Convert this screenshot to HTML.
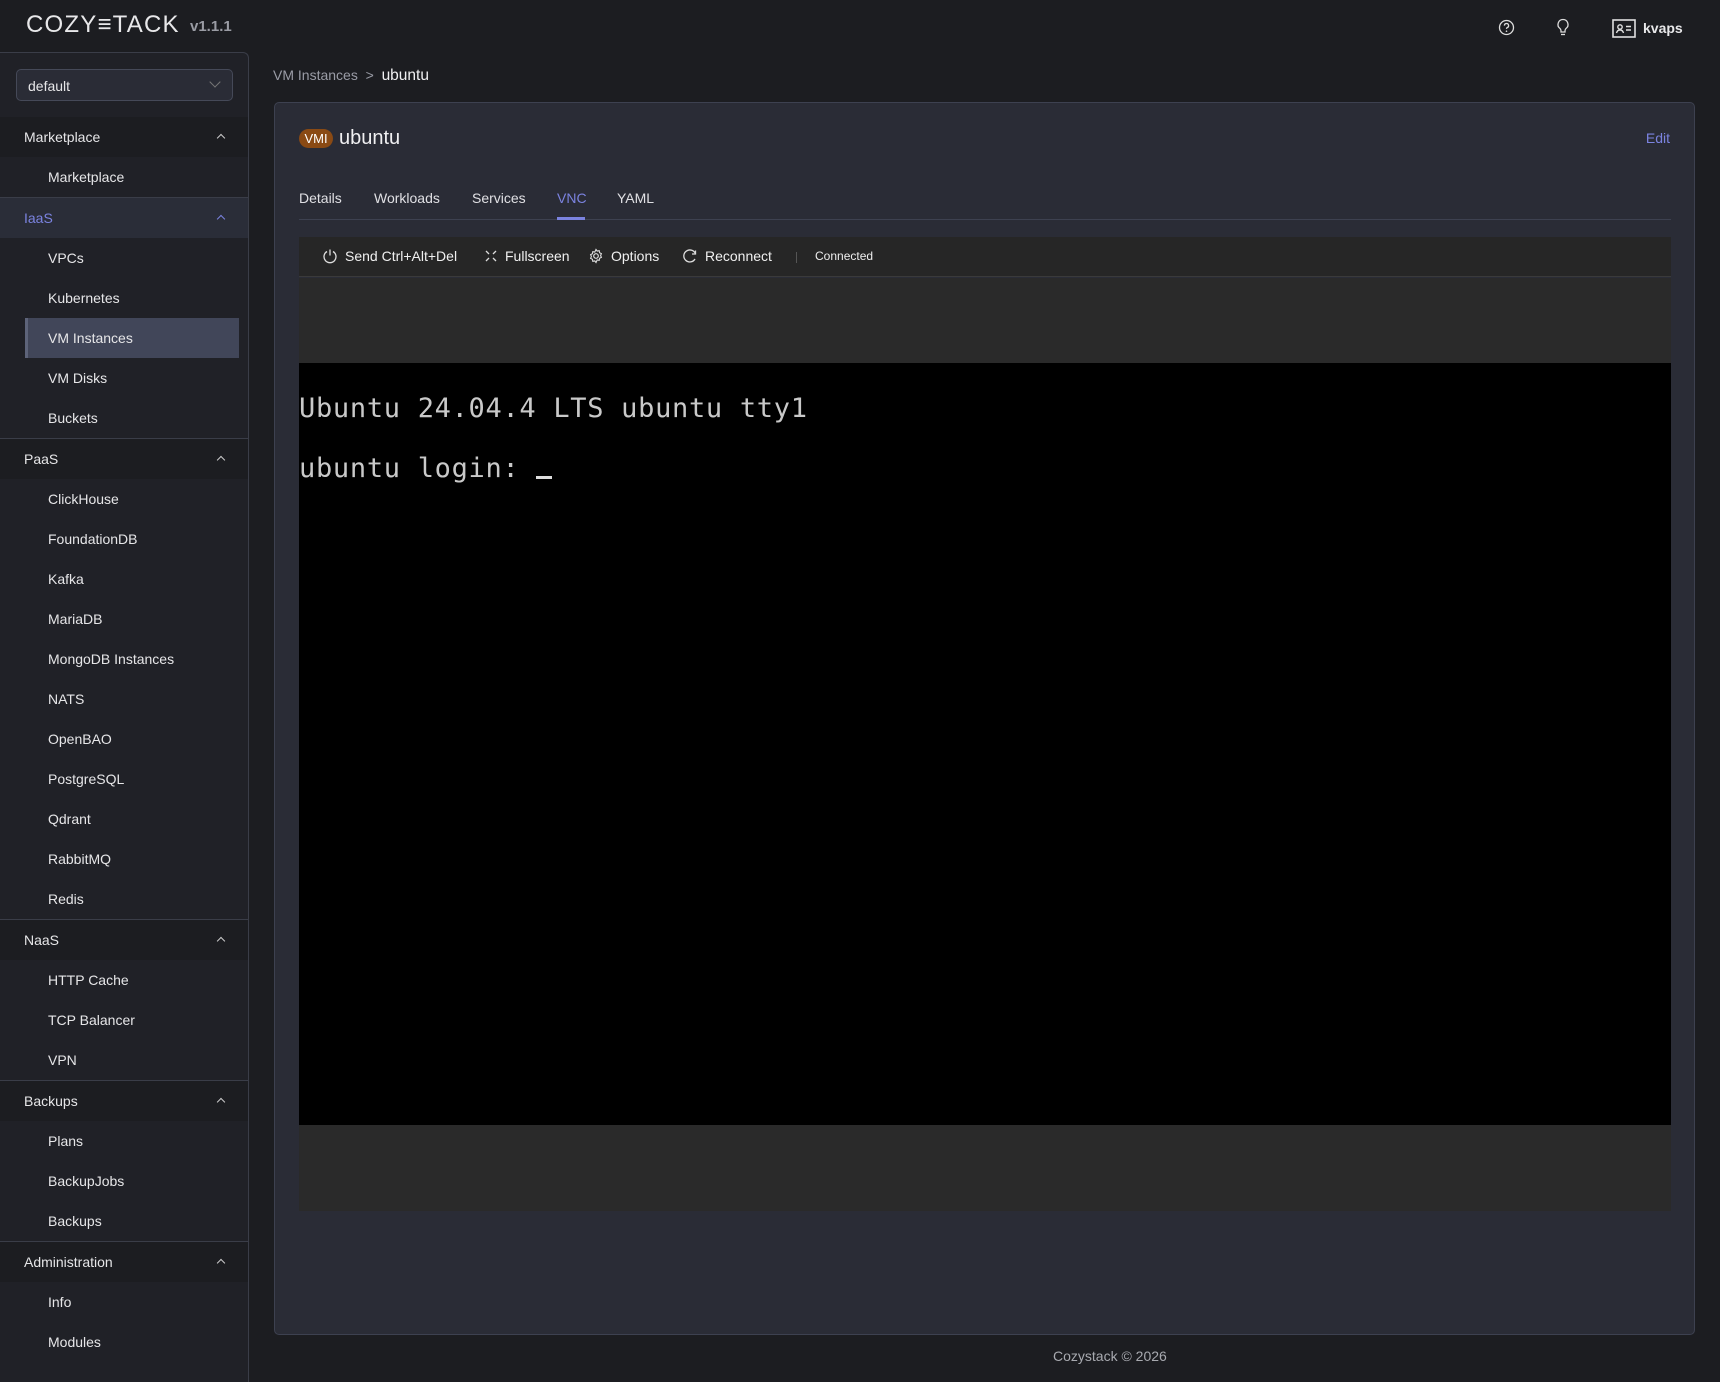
<!DOCTYPE html>
<html><head><meta charset="utf-8"><style>
*{box-sizing:border-box;margin:0;padding:0}
body{width:1720px;height:1374px;background:#1c1d21;font-family:"Liberation Sans",sans-serif;color:#e6e6e8;position:relative;overflow:hidden}
.abs{position:absolute}
.logo{left:26px;top:11px;font-size:24px;letter-spacing:1.2px;color:#e8e8ea;font-weight:300}
.ver{left:190px;top:18px;font-size:15px;font-weight:bold;color:#9a9ca4}
.side{left:0;top:52px;width:249px;height:1330px;background:#202127;border-right:1px solid #3a3d48;border-top:1px solid #3a3d48;border-top-right-radius:6px}
.sel{position:absolute;left:16px;top:16px;width:217px;height:32px;border:1px solid #454958;border-radius:5px;background:#2a2c36;font-size:14px;padding:8px 11px}
.sel:after{content:"";position:absolute;right:13px;top:8px;width:7px;height:7px;border-right:1px solid #777;border-bottom:1px solid #777;transform:rotate(45deg)}
.hdr{position:absolute;left:0;width:248px;height:40px;background:#1c1d21;font-size:14px;padding:12px 24px;}
.hdr.b{border-top:1px solid #3a3d48;height:41px}
.hdr:after{content:"";position:absolute;right:24px;top:18px;width:5px;height:5px;border-left:1px solid #ccc;border-top:1px solid #ccc;transform:rotate(45deg)}
.hdr.act{background:#2a2d38;color:#7b83e0}
.hdr.act:after{border-color:#7b83e0}
.it{position:absolute;left:48px;font-size:14px;height:40px;line-height:40px}
.selit{position:absolute;left:25px;top:265px;width:214px;height:40px;background:#414659;border-left:3px solid #5d6379}
.card{left:274px;top:102px;width:1421px;height:1233px;background:#2a2c36;border:1px solid #3d4150;border-radius:5px}
.tab{position:absolute;top:87px;font-size:14px;color:#e0e0e4}
.tb{position:absolute;top:145px;font-size:14px;color:#f0f0f0;display:flex;align-items:center;gap:7px;line-height:16px}
svg{display:block}
</style></head><body>
<div class="abs logo">COZY&#8801;TACK</div>
<div class="abs ver">v1.1.1</div>
<svg class="abs" style="left:1498px;top:19px" width="17" height="17" viewBox="0 0 17 17"><circle cx="8.5" cy="8.5" r="7" fill="none" stroke="#ddd" stroke-width="1.3"/><path d="M6.4 6.6a2.1 2.1 0 1 1 2.8 2c-.6.3-.7.7-.7 1.3" fill="none" stroke="#ddd" stroke-width="1.3"/><circle cx="8.5" cy="12.2" r=".8" fill="#ddd"/></svg>
<svg class="abs" style="left:1556px;top:18px" width="14" height="19" viewBox="0 0 14 19"><path d="M7 1.5a5 5 0 0 0-3 9c.7.6 1 1.3 1 2.2V14h4v-1.3c0-.9.3-1.6 1-2.2a5 5 0 0 0-3-9z" fill="none" stroke="#ddd" stroke-width="1.3"/><path d="M5 16.5h4" stroke="#ddd" stroke-width="1.3"/></svg>
<svg class="abs" style="left:1612px;top:19px" width="24" height="19" viewBox="0 0 24 19"><rect x="1" y="1" width="22" height="17" fill="none" stroke="#e0e0e0" stroke-width="1.6"/><circle cx="8" cy="8" r="2.2" fill="none" stroke="#e0e0e0" stroke-width="1.4"/><path d="M4.5 14c.5-2 2-3 3.5-3s3 1 3.5 3M14 7.5h5M14 11h5" fill="none" stroke="#e0e0e0" stroke-width="1.4"/></svg>
<div class="abs" style="left:1643px;top:20px;font-size:14px;font-weight:bold;color:#e8e8ea">kvaps</div>

<div class="abs side">
<div class="sel">default</div>
<div class="hdr" style="top:64px">Marketplace</div>
<div class="it" style="top:104px">Marketplace</div>
<div class="hdr b act" style="top:144px">IaaS</div>
<div class="selit"></div>
<div class="it" style="top:185px">VPCs</div>
<div class="it" style="top:225px">Kubernetes</div>
<div class="it" style="top:265px">VM Instances</div>
<div class="it" style="top:305px">VM Disks</div>
<div class="it" style="top:345px">Buckets</div>
<div class="hdr b" style="top:385px">PaaS</div>
<div class="it" style="top:426px">ClickHouse</div>
<div class="it" style="top:466px">FoundationDB</div>
<div class="it" style="top:506px">Kafka</div>
<div class="it" style="top:546px">MariaDB</div>
<div class="it" style="top:586px">MongoDB Instances</div>
<div class="it" style="top:626px">NATS</div>
<div class="it" style="top:666px">OpenBAO</div>
<div class="it" style="top:706px">PostgreSQL</div>
<div class="it" style="top:746px">Qdrant</div>
<div class="it" style="top:786px">RabbitMQ</div>
<div class="it" style="top:826px">Redis</div>
<div class="hdr b" style="top:866px">NaaS</div>
<div class="it" style="top:907px">HTTP Cache</div>
<div class="it" style="top:947px">TCP Balancer</div>
<div class="it" style="top:987px">VPN</div>
<div class="hdr b" style="top:1027px">Backups</div>
<div class="it" style="top:1068px">Plans</div>
<div class="it" style="top:1108px">BackupJobs</div>
<div class="it" style="top:1148px">Backups</div>
<div class="hdr b" style="top:1188px">Administration</div>
<div class="it" style="top:1229px">Info</div>
<div class="it" style="top:1269px">Modules</div>
</div>

<div class="abs" style="left:273px;top:67px;font-size:14px;color:#9a9ca6">VM Instances &nbsp;&gt;&nbsp; <span style="color:#f0f0f2;font-size:15.5px">ubuntu</span></div>

<div class="abs card">
<div class="abs" style="left:24px;top:26px;width:34px;height:19px;border-radius:10px;background:#8a4a14;font-size:13px;color:#fff;text-align:center;line-height:19px">VMI</div>
<div class="abs" style="left:64px;top:24px;font-size:20px;color:#f0f0f2">ubuntu</div>
<div class="abs" style="right:24px;top:27px;font-size:14px;color:#7b83e0">Edit</div>
<div class="tab" style="left:24px">Details</div>
<div class="tab" style="left:99px">Workloads</div>
<div class="tab" style="left:197px">Services</div>
<div class="tab" style="left:282px;color:#7b83e0">VNC</div>
<div class="tab" style="left:342px">YAML</div>
<div class="abs" style="left:24px;top:116px;width:1372px;height:1px;background:#3d4150"></div>
<div class="abs" style="left:282px;top:114px;width:28px;height:3px;background:#7b83e0"></div>
<div class="abs" style="left:24px;top:134px;width:1372px;height:40px;background:#262626;border-bottom:1px solid #3a3a3a"></div>
<div class="tb" style="left:47px"><svg width="16" height="16" viewBox="0 0 16 16"><path d="M5 3.5a6 6 0 1 0 6 0M8 1.5v6" fill="none" stroke="#ddd" stroke-width="1.3"/></svg>Send Ctrl+Alt+Del</div>
<div class="tb" style="left:209px"><svg width="14" height="14" viewBox="0 0 14 14"><path d="M2 2l3 3M12 2l-3 3M2 12l3-3M12 12l-3-3" stroke="#ddd" stroke-width="1.3"/></svg>Fullscreen</div>
<div class="tb" style="left:313px"><svg width="16" height="16" viewBox="0 0 16 16"><circle cx="8" cy="8" r="2.3" fill="none" stroke="#ddd" stroke-width="1.2"/><path d="M8 1.5l1.2 1.6 2-.4.4 2 1.8.9-.8 1.9.8 1.9-1.8.9-.4 2-2-.4L8 14.5l-1.2-1.6-2 .4-.4-2-1.8-.9.8-1.9-.8-1.9 1.8-.9.4-2 2 .4z" fill="none" stroke="#ddd" stroke-width="1.1"/></svg>Options</div>
<div class="tb" style="left:407px"><svg width="16" height="16" viewBox="0 0 16 16"><path d="M13.5 6A6 6 0 1 0 13 11" fill="none" stroke="#ddd" stroke-width="1.3"/><path d="M13.5 2.5V6H10" fill="none" stroke="#ddd" stroke-width="1.3"/></svg>Reconnect</div>
<div class="abs" style="left:521px;top:149px;width:1px;height:11px;background:#555"></div>
<div class="abs" style="left:540px;top:146px;font-size:12px;color:#eee">Connected</div>
<div class="abs" style="left:24px;top:175px;width:1372px;height:85px;background:#2a2a2a"></div>
<div class="abs" style="left:24px;top:260px;width:1372px;height:762px;background:#000;font-family:'DejaVu Sans Mono','Liberation Mono',monospace;font-size:27px;color:#c9c9c9;letter-spacing:0.7px;white-space:pre">
<div class="abs" style="left:0;top:30px">Ubuntu 24.04.4 LTS ubuntu tty1</div>
<div class="abs" style="left:0;top:90px">ubuntu login: <span style="display:inline-block;width:16px;height:3px;background:#ddd;vertical-align:-2px"></span></div>
</div>
<div class="abs" style="left:24px;top:1022px;width:1372px;height:86px;background:#2a2a2a"></div>
</div>
<div class="abs" style="left:1053px;top:1348px;font-size:14px;color:#a8aab0">Cozystack © 2026</div>
</body></html>
